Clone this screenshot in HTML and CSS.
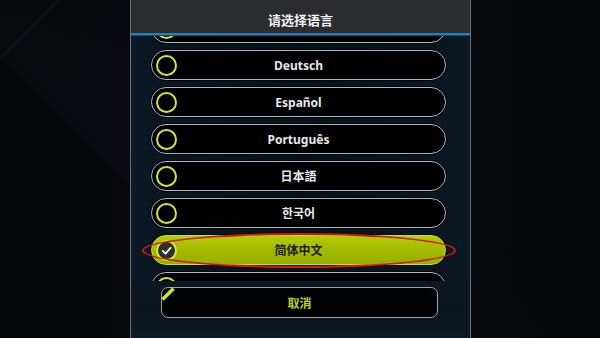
FILE: index.html
```html
<!DOCTYPE html>
<html lang="zh">
<head>
<meta charset="utf-8">
<link rel="stylesheet" href="styles.css">
</head>
<body>
<div class="screen">
  <div class="panel">
    <div class="header">请选择语言</div>
    <div class="list-wrap">
      <ul class="list">
        <li class="item"><span class="radio"></span><span class="label"></span></li>
        <li class="item"><span class="radio"></span><span class="label">Deutsch</span></li>
        <li class="item"><span class="radio"></span><span class="label">Español</span></li>
        <li class="item"><span class="radio"></span><span class="label">Português</span></li>
        <li class="item"><span class="radio"></span><span class="label">日本語</span></li>
        <li class="item"><span class="radio"></span><span class="label ko">한국어</span></li>
        <li class="item selected"><span class="radio"><svg viewBox="0 0 20 20" width="20" height="20"><path d="M5.5 10.5 L8.8 13.6 L14.8 6.8" fill="none" stroke="#f2f2f2" stroke-width="2.2" stroke-linecap="round" stroke-linejoin="round"/></svg></span><span class="label">简体中文</span></li>
        <li class="item"><span class="radio"></span><span class="label"></span></li>
      </ul>
      <div class="annotation"></div>
    </div>
    <div class="footer">
      <div class="cancel-wrap">
        <button class="cancel">取消</button>
        <svg class="corner" viewBox="0 0 16 16" width="16" height="16"><path d="M2.5 13.5 L13.5 2.5" stroke="#cbe822" stroke-width="3.6" stroke-linecap="butt"/></svg>
      </div>
    </div>
  </div>
</div>
</body>
</html>
```

FILE: styles.css
```css
* { box-sizing: border-box; }
html, body { margin: 0; padding: 0; }
body {
  width: 600px;
  height: 338px;
  overflow: hidden;
  background: #040507;
  font-family: "Noto Sans", "Noto Sans CJK SC", "Noto Sans CJK KR", sans-serif;
}
.screen {
  width: 600px;
  height: 338px;
  display: flex;
  justify-content: center;
  background:
    linear-gradient(135deg, transparent 0 6%, rgba(120,140,160,0.07) 6.2%, transparent 6.6%),
    linear-gradient(45deg, transparent 0 30%, rgba(50,60,80,0.05) 30.2%, rgba(18,22,30,0.3) 31%, transparent 60%),
    linear-gradient(90deg, #050608 0%, #07080c 22%, #07080c 78%, #060709 100%);
}
.panel {
  width: 341px;
  height: 338px;
  margin-left: 1px;
  display: flex;
  flex-direction: column;
  border-left: 1.5px solid #6c6e72;
  border-right: 1.5px solid #6c6e72;
  background: linear-gradient(90deg, #0a1a26 0%, #0a1620 10%, #07111a 50%, #0a1620 90%, #0b1a26 100%);
}
.header {
  height: 35px;
  flex: none;
  display: flex;
  align-items: center;
  justify-content: center;
  padding-top: 6px;
  background: #2a2c2e;
  color: #f2f2f2;
  font-size: 13px;
  font-weight: 700;
  border-bottom: 2px solid #2a7cb8;
  position: relative;
  z-index: 2;
  box-shadow: 0 1px 0 #124a70;
}
.list-wrap {
  flex: 1;
  position: relative;
  overflow: hidden;
}
.list {
  list-style: none;
  margin: -22px 0 0 0;
  padding: 0 24px 0 20px;
  display: flex;
  flex-direction: column;
  gap: 7px;
}
.item {
  height: 30px;
  border: 1.6px solid #b0b6bd;
  border-radius: 15px;
  background: #000;
  display: flex;
  align-items: center;
  padding-left: 4px;
  position: relative;
  box-shadow: 0 0 0 1px rgba(0,0,0,0.6);
}
.radio {
  width: 21px;
  height: 21px;
  border-radius: 50%;
  border: 2px solid #d0e43a;
  flex: none;
  display: flex;
  align-items: center;
  justify-content: center;
}
.radio svg { display: block; width: 17px; height: 17px; }
.label {
  flex: 1;
  text-align: center;
  margin-left: -25px;
  color: #e8e8e8;
  font-size: 12px;
  font-weight: 700;
}
.selected {
  background: linear-gradient(180deg, #b4cc08 0%, #a3ba00 50%, #98ae00 100%);
  border-color: #c9e21a;
}
.selected .radio {
  background: #2f3128;
  border-color: #d2e842;
}
.selected .label { color: #1c1e10; }
.annotation {
  position: absolute;
  left: 11px;
  top: 198px;
  width: 314px;
  height: 35px;
  border: 2.4px solid #d01818;
  border-radius: 50%;
  pointer-events: none;
}
.footer {
  height: 57px;
  flex: none;
  padding: 6px 32px 0 30px;
  background: linear-gradient(180deg, #0b1822 0%, #0a1620 50%, #0c1a24 100%);
  position: relative;
  z-index: 2;
}
.cancel-wrap {
  position: relative;
}
.cancel {
  display: block;
  width: 100%;
  height: 31px;
  border: 1.5px solid #9ea3a8;
  border-radius: 7px;
  background: #010203;
  color: #b4d21c;
  font-family: "Noto Sans CJK SC", sans-serif;
  font-size: 12px;
  font-weight: 700;
  padding: 0;
}
.corner {
  position: absolute;
  left: -1px;
  top: -1px;
  display: block;
}
```
